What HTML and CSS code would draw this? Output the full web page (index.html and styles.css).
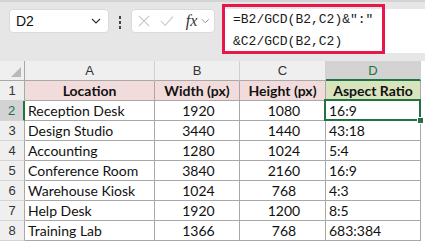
FILE: index.html
```html
<!DOCTYPE html>
<html lang="en">
<head>
  <meta charset="UTF-8" />
  <title>Aspect Ratio</title>
  <link rel="stylesheet" href="styles.css">
</head>
<body>
  <div class="topbar">
    <div class="namebox">
      <span>D2</span>
      <svg class="chev" width="10" height="6" viewBox="0 0 10 6"><path d="M1 1l4 4 4-4" fill="none" stroke="#333" stroke-width="1.2"/></svg>
    </div>
    <div class="grip"><i></i><i></i><i></i></div>
    <div class="fxbox">
      <svg width="14" height="14" viewBox="0 0 14 14"><path d="M1 1l12 12M13 1L1 13" stroke="#c4c4c4" stroke-width="1.2"/></svg>
      <svg width="16" height="14" viewBox="0 0 16 14"><path d="M1 7l5 5L15 2" fill="none" stroke="#c4c4c4" stroke-width="1.2"/></svg>
      <span class="fx">fx</span>
      <svg class="chev" width="10" height="6" viewBox="0 0 10 6"><path d="M1 1l4 4 4-4" fill="none" stroke="#888" stroke-width="1.1"/></svg>
    </div>
    <div class="formula">=B2/GCD(B2,C2)&amp;":"<br>&amp;C2/GCD(B2,C2)</div>
    <div class="highlight"></div>
  </div>

  <div class="sheet">
    <div class="hd corner"></div>
    <div class="hd">A</div>
    <div class="hd">B</div>
    <div class="hd">C</div>
    <div class="hd hd-sel">D</div>

    <div class="rh">1</div>
    <div class="cell th">Location</div>
    <div class="cell th">Width (px)</div>
    <div class="cell th">Height (px)</div>
    <div class="cell th th-green">Aspect Ratio</div>

    <div class="rh rh-sel">2</div>
    <div class="cell">Reception Desk</div>
    <div class="cell num">1920</div>
    <div class="cell num">1080</div>
    <div class="cell active">16:9</div>

    <div class="rh">3</div>
    <div class="cell">Design Studio</div>
    <div class="cell num">3440</div>
    <div class="cell num">1440</div>
    <div class="cell">43:18</div>

    <div class="rh">4</div>
    <div class="cell">Accounting</div>
    <div class="cell num">1280</div>
    <div class="cell num">1024</div>
    <div class="cell">5:4</div>

    <div class="rh">5</div>
    <div class="cell">Conference Room</div>
    <div class="cell num">3840</div>
    <div class="cell num">2160</div>
    <div class="cell">16:9</div>

    <div class="rh">6</div>
    <div class="cell">Warehouse Kiosk</div>
    <div class="cell num">1024</div>
    <div class="cell num">768</div>
    <div class="cell">4:3</div>

    <div class="rh">7</div>
    <div class="cell">Help Desk</div>
    <div class="cell num">1920</div>
    <div class="cell num">1200</div>
    <div class="cell">8:5</div>

    <div class="rh">8</div>
    <div class="cell">Training Lab</div>
    <div class="cell num">1366</div>
    <div class="cell num">768</div>
    <div class="cell">683:384</div>
  </div>
</body>
</html>
```

FILE: styles.css
```css
body {
  margin: 0;
  background: white;
  font-family: Lato, "Liberation Sans", sans-serif;
  font-size: 14px;
  color: #111;
}

.topbar {
  position: relative;
  display: flex;
  align-items: flex-start;
  height: 61px;
  box-sizing: border-box;
  padding: 7px 0 0 9px;
  background: #e6e6e6;
  border-top: 2px solid #d3d3d3;
}

.namebox {
  display: flex;
  align-items: center;
  justify-content: space-between;
  width: 100px;
  height: 24px;
  box-sizing: border-box;
  padding: 0 7px 0 6px;
  background: white;
  border: 1px solid #dadada;
  border-radius: 4px;
  font-family: "Liberation Sans", sans-serif;
  font-size: 14px;
}

.grip {
  display: flex;
  flex-direction: column;
  align-items: center;
  gap: 2px;
  width: 22px;
  padding-top: 7px;
}

.grip i {
  width: 2px;
  height: 3px;
  background: #444;
}

.fxbox {
  display: flex;
  align-items: center;
  gap: 10px;
  width: 84px;
  height: 24px;
  box-sizing: border-box;
  padding: 0 4px 0 6px;
  background: white;
  border: 1px solid #dadada;
  border-radius: 4px;
}

.fx {
  font-family: "Liberation Serif", serif;
  font-style: italic;
  font-size: 16px;
  color: #333;
  margin-left: 2px;
  margin-right: -6px;
}

.formula {
  flex: 1;
  height: 44px;
  margin: 0 0 0 7px;
  padding-left: 11px;
  background: white;
  border-radius: 4px 0 0 4px;
  font-family: "Liberation Mono", monospace;
  font-size: 13px;
  line-height: 22px;
  color: #1a1a1a;
}

.highlight {
  position: absolute;
  left: 222px;
  top: 2px;
  width: 163px;
  height: 50px;
  box-sizing: border-box;
  border: 3px solid #e8174a;
}

.sheet {
  display: grid;
  grid-template-columns: 25px 130px 85px 86px 95px;
  grid-auto-rows: 20px;
  width: 421px;
}

.sheet > div {
  box-sizing: border-box;
  display: flex;
  align-items: center;
  white-space: nowrap;
}

.hd {
  justify-content: center;
  background: #efefef;
  border-right: 1px solid #d0d0d0;
  border-bottom: 1px solid #a8a8a8;
  color: #333;
  font-family: "Liberation Sans", sans-serif;
  font-size: 13px;
}

.corner {
  position: relative;
  border-right-color: #a8a8a8;
}

.corner::after {
  content: "";
  position: absolute;
  right: 3px;
  bottom: 3px;
  border-left: 10px solid transparent;
  border-bottom: 10px solid #b9b9b9;
}

.hd-sel {
  background: #d3d3d3;
  color: #217346;
  border-bottom: 2px solid #217346;
}

.rh {
  justify-content: center;
  background: #efefef;
  border-right: 1px solid #a8a8a8;
  border-bottom: 1px solid #d4d4d4;
  color: #333;
  font-family: "Liberation Sans", sans-serif;
  font-size: 13px;
}

.rh-sel {
  background: #d3d3d3;
  color: #217346;
  border-right: 2px solid #217346;
}

.cell {
  padding-left: 3px;
  border-right: 1px solid #a8a8a8;
  border-bottom: 1px solid #a8a8a8;
}

.num {
  justify-content: center;
}

.th {
  justify-content: center;
  padding-left: 0;
  background: #f2dcdb;
  font-weight: bold;
}

.th-green {
  background: #d8e4bc;
}

.active {
  position: relative;
}

.active::after {
  content: "";
  position: absolute;
  left: -2px;
  top: -2px;
  right: -1px;
  bottom: -1px;
  border: 2px solid #217346;
}

.active::before {
  content: "";
  position: absolute;
  right: -4px;
  bottom: -4px;
  width: 5px;
  height: 5px;
  background: #217346;
  border: 1px solid white;
  z-index: 1;
}
```
